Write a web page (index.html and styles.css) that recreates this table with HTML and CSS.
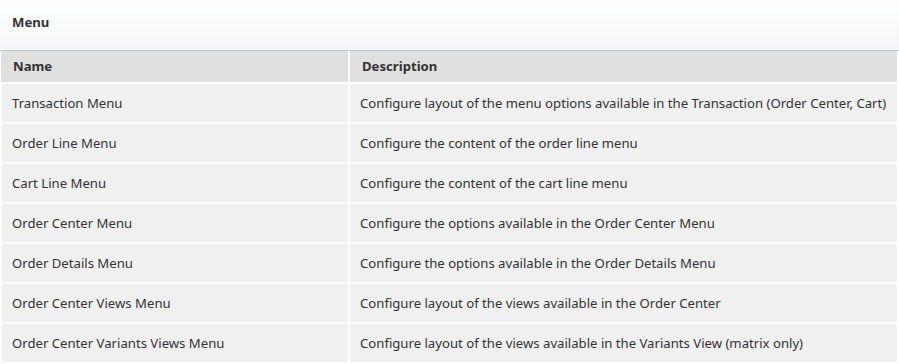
FILE: index.html
```html
<!DOCTYPE html>
<html lang="en">
<head>
    <meta charset="UTF-8">
    <title>Menu</title>
    <link rel="stylesheet" href="styles.css">
</head>
<body>
    <div class="panel-title">Menu</div>
    <table class="menu-table">
        <thead>
            <tr>
                <th class="col-name">Name</th>
                <th>Description</th>
            </tr>
        </thead>
        <tbody>
            <tr>
                <td>Transaction Menu</td>
                <td>Configure layout of the menu options available in the Transaction (Order Center, Cart)</td>
            </tr>
            <tr>
                <td>Order Line Menu</td>
                <td>Configure the content of the order line menu</td>
            </tr>
            <tr>
                <td>Cart Line Menu</td>
                <td>Configure the content of the cart line menu</td>
            </tr>
            <tr>
                <td>Order Center Menu</td>
                <td>Configure the options available in the Order Center Menu</td>
            </tr>
            <tr>
                <td>Order Details Menu</td>
                <td>Configure the options available in the Order Details Menu</td>
            </tr>
            <tr>
                <td>Order Center Views Menu</td>
                <td>Configure layout of the views available in the Order Center</td>
            </tr>
            <tr>
                <td>Order Center Variants Views Menu</td>
                <td>Configure layout of the views available in the Variants View (matrix only)</td>
            </tr>
        </tbody>
    </table>
</body>
</html>
```

FILE: styles.css
```css
body {
    margin: 0;
    background: #fff;
    font-family: "Segoe UI", "Noto Sans", "Open Sans", sans-serif;
    font-size: 13.15px;
    color: #333;
}
.panel-title {
    height: 51px;
    line-height: 45px;
    padding-left: 12px;
    font-weight: bold;
    background: linear-gradient(#fff, #f3f6f8);
    border-bottom: 1px solid #c4c4c4;
    box-sizing: border-box;
}
.menu-table {
    width: 100%;
    border-collapse: collapse;
}
.menu-table th,
.menu-table td {
    text-align: left;
    border: 2px solid #fff;
    border-top: none;
}
.menu-table th {
    height: 29px;
    padding: 0 12px 2px;
    background: #e0e0e0;
    font-weight: bold;
    border-left: none;
}
.menu-table td {
    height: 38px;
    padding: 0 10px;
    background: #f0f0f0;
    border-top: 2px solid #fff;
}
.menu-table .col-name {
    width: 323px;
}
```
